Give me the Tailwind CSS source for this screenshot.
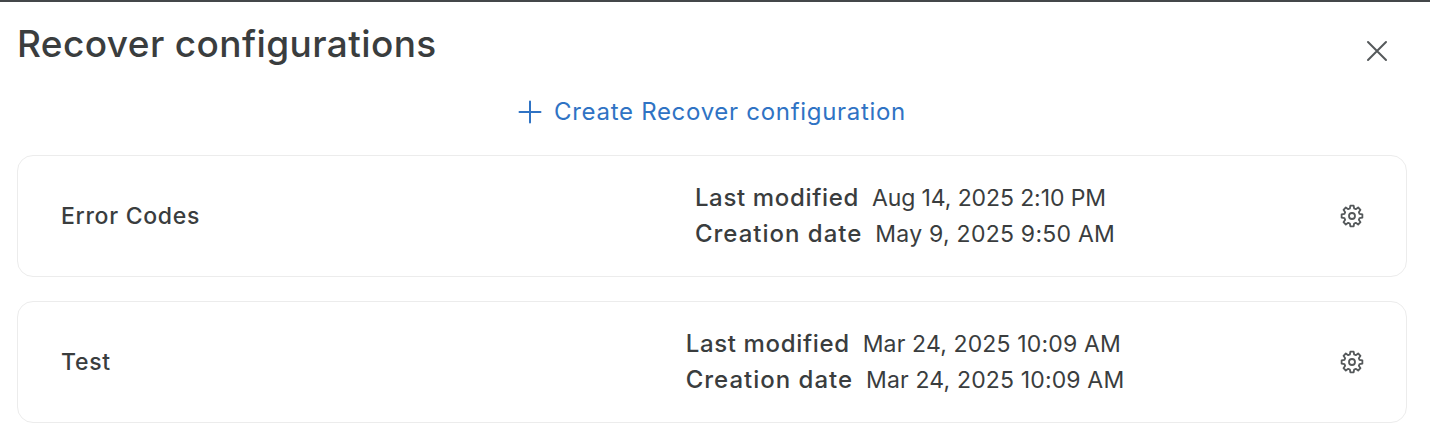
<!doctype html>
<html lang="en">
<head>
<meta charset="utf-8">
<title>Recover configurations</title>
<script src="https://cdn.jsdelivr.net/npm/@tailwindcss/browser@4"></script>
</head>
<body class="bg-white font-['Inter',sans-serif] text-[#3a3d3e]">
  <div class="h-[430px] w-[1430px] overflow-hidden border-t-2 border-[#44474a]">
    <!-- Header -->
    <div class="flex items-start justify-between pl-[17px] pr-[41px]">
      <h1 class="mt-[17px] text-[37px] leading-[50px] font-medium tracking-[0.4px]">Recover configurations</h1>
      <button class="mt-[37px] text-[#55595b]">
        <svg class="h-6 w-6" viewBox="0 0 24 24" fill="none" stroke="currentColor" stroke-width="2" stroke-linecap="round">
          <path d="M3 3l18 18M21 3L3 21"/>
        </svg>
      </button>
    </div>

    <!-- Create link -->
    <div class="mt-[25px] flex items-center justify-center gap-[12px] pr-[6px] text-[#2f73c4]">
      <svg class="h-6 w-6" viewBox="0 0 24 24" fill="none" stroke="currentColor" stroke-width="2" stroke-linecap="round">
        <path d="M12 1.5v21M1.5 12h21"/>
      </svg>
      <span class="text-[24px] leading-9 tracking-[0.7px]">Create Recover configuration</span>
    </div>

    <!-- Config cards -->
    <div class="mt-[25px] mx-[17px] flex w-[1390px] flex-col gap-6">
      <div class="flex h-[122px] items-center rounded-2xl border border-[#ececec] pl-[43px] pr-[42px]">
        <div class="w-[409px] text-[23px] font-medium tracking-[0.7px]">Error Codes</div>
        <div class="flex flex-1 justify-center text-[23px] leading-9">
          <div>
            <div class="tracking-[-0.1px]"><span class="mr-[13px] text-[24px] font-medium tracking-[0.65px]">Last modified</span>Aug 14, 2025 2:10 PM</div>
            <div class="tracking-[0.25px]"><span class="mr-[13px] text-[24px] font-medium tracking-[1px]">Creation date</span>May 9, 2025 9:50 AM</div>
          </div>
        </div>
        <svg class="h-6 w-6 text-[#55595b]" viewBox="0 0 24 24" fill="none" stroke="currentColor" stroke-width="1.8" stroke-linejoin="round">
          <path d="M9.85 4.5L10.36 1.63H13.64L14.15 4.5L15.78 5.18L18.17 3.51L20.49 5.83L18.82 8.22L19.5 9.85L22.37 10.36V13.64L19.5 14.15L18.82 15.78L20.49 18.17L18.17 20.49L15.78 18.82L14.15 19.5L13.64 22.37H10.36L9.85 19.5L8.22 18.82L5.83 20.49L3.51 18.17L5.18 15.78L4.5 14.15L1.63 13.64V10.36L4.5 9.85L5.18 8.22L3.51 5.83L5.83 3.51L8.22 5.18Z"/>
          <circle cx="12" cy="12" r="3"/>
        </svg>
      </div>

      <div class="flex h-[122px] items-center rounded-2xl border border-[#ececec] pl-[43px] pr-[42px]">
        <div class="w-[409px] text-[23px] font-medium tracking-[0.7px]">Test</div>
        <div class="flex flex-1 justify-center text-[23px] leading-9">
          <div class="tracking-[0.15px]">
            <div><span class="mr-[13px] text-[24px] font-medium tracking-[0.65px]">Last modified</span>Mar 24, 2025 10:09 AM</div>
            <div><span class="mr-[13px] text-[24px] font-medium tracking-[1px]">Creation date</span>Mar 24, 2025 10:09 AM</div>
          </div>
        </div>
        <svg class="h-6 w-6 text-[#55595b]" viewBox="0 0 24 24" fill="none" stroke="currentColor" stroke-width="1.8" stroke-linejoin="round">
          <path d="M9.85 4.5L10.36 1.63H13.64L14.15 4.5L15.78 5.18L18.17 3.51L20.49 5.83L18.82 8.22L19.5 9.85L22.37 10.36V13.64L19.5 14.15L18.82 15.78L20.49 18.17L18.17 20.49L15.78 18.82L14.15 19.5L13.64 22.37H10.36L9.85 19.5L8.22 18.82L5.83 20.49L3.51 18.17L5.18 15.78L4.5 14.15L1.63 13.64V10.36L4.5 9.85L5.18 8.22L3.51 5.83L5.83 3.51L8.22 5.18Z"/>
          <circle cx="12" cy="12" r="3"/>
        </svg>
      </div>
    </div>
  </div>
</body>
</html>
